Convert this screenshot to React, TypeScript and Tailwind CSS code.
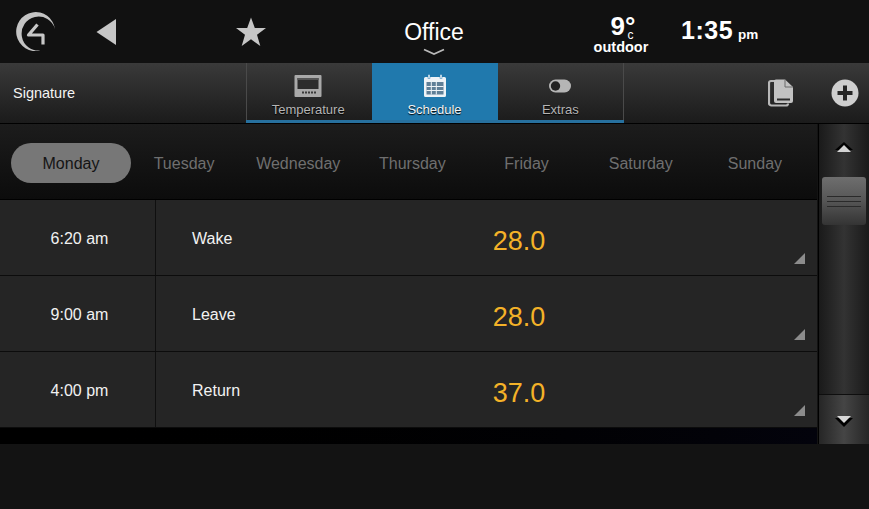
import React from "react";

const font = "font-['Liberation_Sans',Arial,sans-serif]";

function Logo() {
  return (
    <svg width="42" height="42" viewBox="0 0 42 42" fill="none">
      <path d="M40 18A19.500 19.500 0 1 0 25.500 39.500A17 17 0 1 1 40 18Z" fill="#c4c4c4" />
      <path d="M22.500 13.500L13.500 24H28V33.500" stroke="#c8c8c8" strokeWidth="3.200" strokeLinejoin="round" />
    </svg>
  );
}

function ThermostatIcon() {
  return (
    <svg width="28" height="24" viewBox="0 0 28 24">
      <rect x="0.500" y="1" width="27" height="22" rx="1" fill="#a9a9a9" />
      <rect x="3.500" y="4" width="21" height="11" fill="#2c2c2c" />
      <rect x="3.500" y="4" width="21" height="2" fill="#555" />
      {[8, 11, 14, 17, 20].map((x) => (
        <rect key={x} x={x} y="17.500" width="2" height="2" fill="#3a3a3a" />
      ))}
    </svg>
  );
}

function CalendarIcon() {
  return (
    <svg width="24" height="24" viewBox="0 0 24 24">
      <path d="M2.500 3H21.500A1.500 1.500 0 0 1 23 4.500V21.500A1.500 1.500 0 0 1 21.500 23H2.500A1.500 1.500 0 0 1 1 21.500V4.500A1.500 1.500 0 0 1 2.500 3Z" fill="#eef3f7" />
      <rect x="5" y="0.500" width="2" height="4" fill="#eef3f7" stroke="#2079ad" strokeWidth="0.500" />
      <rect x="17" y="0.500" width="2" height="4" fill="#eef3f7" stroke="#2079ad" strokeWidth="0.500" />
      <rect x="3.500" y="8" width="17" height="12.500" fill="#5f7f97" />
      {[7.500, 12.500].map((x) => (
        <rect key={x} x={x + 0.300} y="8" width="1" height="12.500" fill="#eef3f7" />
      ))}
      {[12, 16].map((y) => (
        <rect key={y} x="3.500" y={y} width="17" height="1" fill="#eef3f7" />
      ))}
    </svg>
  );
}

function ToggleIcon() {
  return (
    <svg width="24" height="14" viewBox="0 0 24 14">
      <rect x="1" y="0.500" width="22" height="13" rx="6.500" fill="#b5b5b5" />
      <circle cx="7.500" cy="7" r="4.700" fill="#222" />
    </svg>
  );
}

function CopyIcon() {
  return (
    <svg width="26" height="30" viewBox="0 0 26 30">
      <path d="M7 3H3A2 2 0 0 0 1 5V25A2.500 2.500 0 0 0 3.500 27.500H18A2 2 0 0 0 20 25.500" fill="none" stroke="#b8b8b8" strokeWidth="2.200" />
      <path d="M6 3.500A2 2 0 0 1 8 1.500H17L25 9V23A2 2 0 0 1 23 25H8A2 2 0 0 1 6 23Z" fill="#c2c2c2" />
      <path d="M17 1.500V9H25" fill="none" stroke="#6a6a6a" strokeWidth="1" />
      <path d="M9 20.500H22V22.500H9Z" fill="#2c2c2c" />
    </svg>
  );
}

function PlusIcon() {
  return (
    <svg width="28" height="28" viewBox="0 0 28 28">
      <circle cx="14" cy="14" r="13.500" fill="#cfcfcf" />
      <path d="M12 6.500H16V12H21.500V16H16V21.500H12V16H6.500V12H12Z" fill="#262626" />
    </svg>
  );
}

function Tab({ label, icon, active, className }: { label: string; icon: React.ReactNode; active?: boolean; className?: string }) {
  return (
    <div
      className={`flex h-full w-[126px] flex-col items-center ${active ? "bg-[#2079ad] text-[#f0f4f7]" : "text-[#b5b5b5]"} ${className ?? ""}`}
    >
      <div className="mt-[11px] flex h-[24px] items-center justify-center">{icon}</div>
      <div className="mt-[5px] text-[13px] leading-[14px] [text-shadow:0_1px_1px_#000]">{label}</div>
    </div>
  );
}

function Row({ time, name, temp }: { time: string; name: string; temp: string }) {
  return (
    <div className="relative flex h-[76px] border-b border-[#0c0c0c] bg-[#252525]">
      <div className="flex w-[156px] items-center justify-center border-r border-[#0f0f0f] pt-[2px] pl-[4px] text-[16px] text-[#f2f2f2]">
        {time}
      </div>
      <div className="flex w-[290px] items-center pt-[2px] pl-[36px] text-[16px] text-[#f2f2f2]">{name}</div>
      <div className="flex w-[146px] items-center justify-center pt-[8px] text-[27px] text-[#f4b228]">{temp}</div>
      <div className="absolute bottom-[11px] right-[12px] h-0 w-0 border-b-[11px] border-l-[11px] border-b-[#8c8c8c] border-l-transparent" />
    </div>
  );
}

const days = ["Tuesday", "Wednesday", "Thursday", "Friday", "Saturday", "Sunday"];

export default function App() {
  return (
    <div className={`flex h-[509px] w-[869px] flex-col overflow-hidden bg-[#131313] ${font}`}>
      {/* Top bar */}
      <header className="flex h-[63px] items-center bg-[#111111]">
        <div className="ml-[15px] w-[42px]">
          <Logo />
        </div>
        <svg className="ml-[39px]" width="20" height="28" viewBox="0 0 20 28">
          <path d="M20 1V27L0.500 14Z" fill="#c6c6c6" />
        </svg>
        <svg className="ml-[119px]" width="32" height="30" viewBox="0 0 32 30">
          <path d="M16 0.500L19.800 11H31L22 17.800L25.300 29L16 22.300L6.700 29L10 17.800L1 11H12.200Z" fill="#c6c6c6" />
        </svg>
        <div className="ml-[122px] flex w-[90px] flex-col items-center pt-[11px]">
          <div className="text-[23px] leading-[26px] text-white">Office</div>
          <svg className="mt-[3px]" width="22" height="8" viewBox="0 0 22 8">
            <path d="M1 1.500L11 6L21 1.500" fill="none" stroke="#b9b9b9" strokeWidth="1.800" />
          </svg>
        </div>
        <div className="ml-[102px] flex w-[80px] flex-col items-center pt-[4px] text-white">
          <div className="relative pl-[4px] text-[26px] font-bold leading-[26px]">
            9°
            <span className="absolute bottom-[1px] right-[2px] text-[12px] font-normal leading-[6px]">c</span>
          </div>
          <div className="text-[14.500px] font-bold leading-[16px]">outdoor</div>
        </div>
        <div className="ml-[20px] flex items-baseline pb-[2px] text-white">
          <span className="text-[25px] font-bold tracking-[0.5px]">1:35</span>
          <span className="ml-[5px] text-[13.500px] font-bold">pm</span>
        </div>
      </header>

      {/* Sub bar */}
      <nav className="flex h-[61px] border-b border-black bg-gradient-to-b from-[#3a3a3a] via-[#2a2a2a] to-[#1b1b1b]">
        <div className="w-[246px] pt-[21px] pl-[13px] text-[14.500px] leading-[18px] text-[#f4f4f4]">Signature</div>
        <div className="flex h-[60px] w-[378px] flex-col">
          <div className="flex h-[57px] border-l border-r border-[#4a4a4a]">
            <Tab label="Temperature" icon={<ThermostatIcon />} className="pr-[3px]" />
            <Tab label="Schedule" icon={<CalendarIcon />} active className="pr-[1px]" />
            <Tab label="Extras" icon={<ToggleIcon />} />
          </div>
          <div className="h-[3px] bg-[#27709e]" />
        </div>
        <div className="flex flex-1 items-center justify-end pr-[10px] pb-[1px]">
          <CopyIcon />
          <div className="ml-[37px]">
            <PlusIcon />
          </div>
        </div>
      </nav>

      {/* Main */}
      <main className="flex h-[320px]">
        <section className="flex w-[817px] flex-col bg-black">
          <div className="flex h-[76px] items-center border-b border-black bg-gradient-to-b from-[#1c1c1c] to-[#0c0c0c] pt-[3px] pl-[11px] text-[16px] text-[#6f6f6f]">
            <div className="flex h-[40px] w-[120px] items-center justify-center rounded-[20px] bg-[#777777] pt-[2px] text-[#141414]">
              Monday
            </div>
            <div className="-ml-[4px] grid w-[685px] grid-cols-6 pt-[2px]">
              {days.map((d) => (
                <div key={d} className="text-center">
                  {d}
                </div>
              ))}
            </div>
          </div>
          <Row time="6:20 am" name="Wake" temp="28.0" />
          <Row time="9:00 am" name="Leave" temp="28.0" />
          <Row time="4:00 pm" name="Return" temp="37.0" />
          <div className="flex-1 bg-gradient-to-r from-black to-[#03030c]" />
        </section>

        {/* Scrollbar */}
        <aside className="ml-[1px] flex w-[51px] flex-col border-l border-black bg-gradient-to-r from-[#1a1a1a] via-[#333333] to-[#1a1a1a]">
          <div className="flex h-[48px] items-center justify-center pb-[1px]">
            <svg width="18" height="12" viewBox="0 0 18 12">
              <path d="M9 0L18 8H0Z" fill="#000" />
              <path d="M9 3L16 10H2Z" fill="#d2d2d2" />
            </svg>
          </div>
          <div className="mx-[3px] mt-[5px] flex h-[48px] w-[44px] flex-col justify-center gap-[4px] rounded-[3px] bg-gradient-to-b from-[#6e6e6e] via-[#565656] to-[#343434] px-[5px]">
            <div className="h-[1px] bg-[#2a2a2a]" />
            <div className="h-[1px] bg-[#2a2a2a]" />
            <div className="h-[1px] bg-[#2a2a2a]" />
          </div>
          <div className="flex-1 border-b border-[#0e0e0e]" />
          <div className="flex h-[49px] items-center justify-center bg-gradient-to-r from-[#262626] via-[#454545] to-[#262626] pt-[2px]">
            <svg width="18" height="12" viewBox="0 0 18 12">
              <path d="M0 3H18L9 12Z" fill="#000" />
              <path d="M2 1H16L9 8Z" fill="#d8d8d8" />
            </svg>
          </div>
        </aside>
      </main>
    </div>
  );
}
